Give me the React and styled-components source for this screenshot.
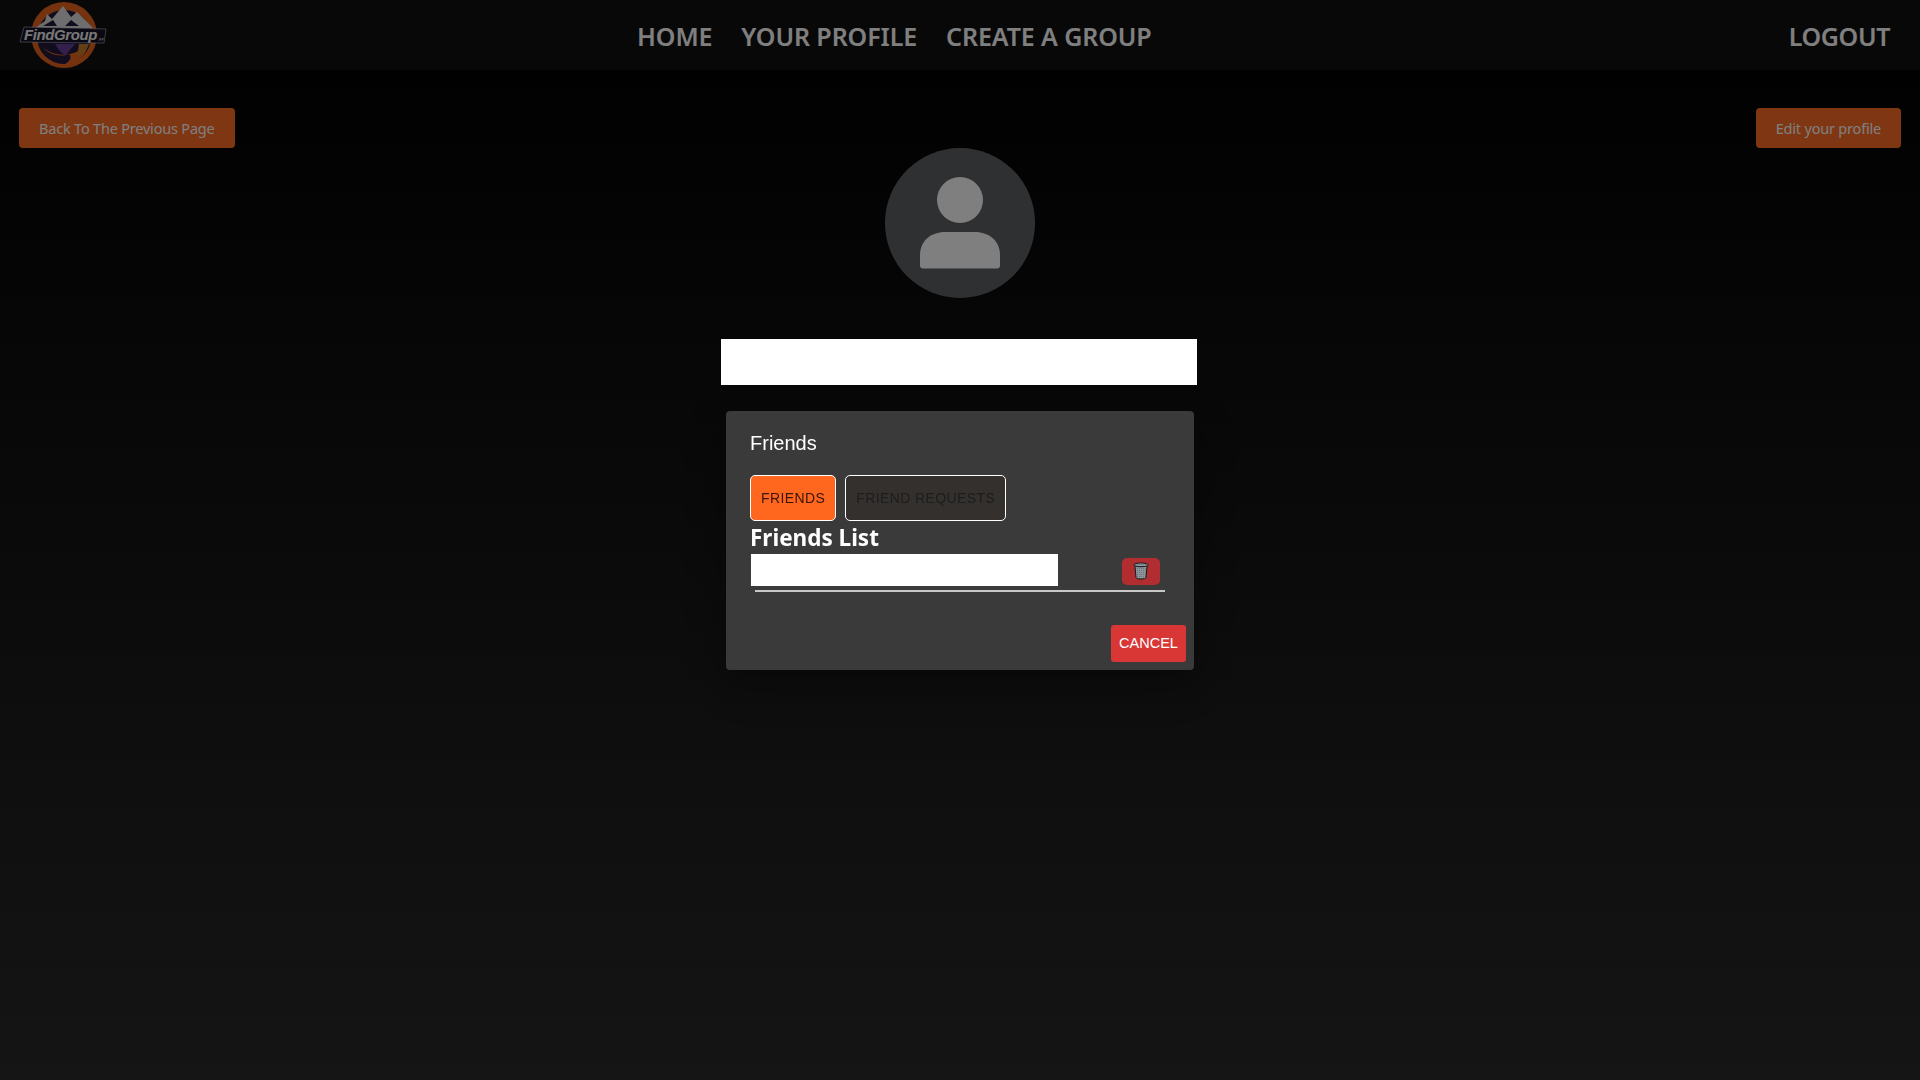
import React from "react"
import styled, { createGlobalStyle } from "styled-components"

const GlobalStyle = createGlobalStyle`
  * {
    box-sizing: border-box;
  }
  body {
    margin: 0;
    background: #000;
    font-family: "Liberation Sans", Arial, sans-serif;
  }
`

const segoe = `"Noto Sans", "Open Sans", sans-serif`

const Page = styled.div`
  min-height: 100vh;
  background: linear-gradient(180deg, #000 0%, #2a2a2a 100%);
`

const Header = styled.header`
  height: 70px;
  background: #101010;
  padding: 1px 30px 0 19px;
  display: flex;
  align-items: center;
`

const LogoBox = styled.div`
  width: 618px;
  height: 70px;
  margin-top: -1px;
  flex-shrink: 0;
`

const Nav = styled.nav`
  display: flex;
  gap: 29px;
`

const NavLink = styled.a`
  font-family: ${segoe};
  font-size: 25px;
  font-weight: 600;
  line-height: 36px;
  letter-spacing: ${(p) => (p.$end ? "-0.4px" : "-0.1px")};
  color: #fff;
  white-space: nowrap;
  margin-left: ${(p) => (p.$end ? "auto" : "0")};
`

const Content = styled.main`
  padding: 38px 19px 0;
  display: flex;
  flex-direction: column;
  align-items: center;
`

const ButtonRow = styled.div`
  width: 100%;
  display: flex;
  justify-content: space-between;
`

const ActionButton = styled.button`
  height: 40px;
  padding: 0 20px;
  border: 0;
  border-radius: 4px;
  background: #ff6c24;
  color: #fff;
  font-family: ${segoe};
  font-size: 14.5px;
  letter-spacing: -0.2px;
`

const Avatar = styled.div`
  width: 150px;
  height: 150px;
  border-radius: 50%;
  background: #5e6165;
  display: flex;
  align-items: center;
  justify-content: center;
`

const NameBar = styled.div`
  position: relative;
  z-index: 20;
  width: 476px;
  height: 46px;
  margin: 41px 0 0 -2px;
  background: #fff;
`

const Overlay = styled.div`
  position: fixed;
  inset: 0;
  z-index: 10;
  background: rgba(0, 0, 0, 0.5);
  display: flex;
  justify-content: center;
  align-items: flex-start;
  padding-top: 411px;
`

const Dialog = styled.section`
  position: relative;
  z-index: 30;
  width: 468px;
  height: 259px;
  border-radius: 4px;
  background: #3a3a3a;
  box-shadow: 0 11px 15px -7px rgba(0, 0, 0, 0.2),
    0 24px 38px 3px rgba(0, 0, 0, 0.14), 0 9px 46px 8px rgba(0, 0, 0, 0.12);
  padding: 20px 8px 8px 24px;
  display: flex;
  flex-direction: column;
`

const DialogTitle = styled.h2`
  margin: 0;
  font-size: 20px;
  font-weight: 400;
  line-height: 24px;
  color: #fff;
`

const Tabs = styled.div`
  display: flex;
  gap: 9px;
  margin-top: 20px;
`

const Tab = styled.button`
  height: 46px;
  padding: 0 10px;
  border: 1px solid #fff;
  border-radius: 5px;
  background: ${(p) => (p.$active ? "#ff671f" : "#33302e")};
  color: ${(p) => (p.$active ? "#3a1405" : "#1d1d1d")};
  font-family: "Liberation Sans", Arial, sans-serif;
  font-size: 14px;
  letter-spacing: 0.4px;
`

const ListTitle = styled.h3`
  margin: 2px 0 0;
  font-family: ${segoe};
  font-size: 22.5px;
  font-weight: 700;
  line-height: 30px;
  color: #fff;
`

const FriendRow = styled.div`
  display: flex;
  align-items: center;
  width: 416px;
  margin-top: 1px;
  padding-right: 6px;
  justify-content: space-between;
`

const FriendName = styled.div`
  width: 307px;
  height: 32px;
  margin-left: 1px;
  background: #fff;
`

const DeleteButton = styled.button`
  width: 38px;
  height: 27px;
  margin-top: 2px;
  border: 0;
  border-radius: 5px;
  background: #b22d2f;
  display: flex;
  align-items: center;
  justify-content: center;
  padding: 0;
`

const Divider = styled.hr`
  width: 410px;
  height: 2px;
  margin: 4px 0 0 5px;
  border: 0;
  background: #c8c8c8;
`

const Footer = styled.div`
  display: flex;
  justify-content: flex-end;
  margin-top: auto;
`

const CancelButton = styled.button`
  width: 75px;
  height: 37px;
  padding: 0 0 1px;
  border: 0;
  border-radius: 3px;
  background: #d93636;
  color: #fff;
  font-family: "Liberation Sans", Arial, sans-serif;
  font-size: 14.5px;
`

const Logo = () => (
  <svg width="92" height="70" viewBox="0 0 92 70">
    <circle cx="45" cy="35" r="33" fill="#e8651f" />
    <circle cx="45" cy="37" r="27" fill="#241a3c" />
    <path d="M16 28 L26 21 L28 14 L33 19 L44 6 L52 17 L58 12 L74 28 Z" fill="#dcdcdc" />
    <path d="M24 26 L34 20 L38 26 Z M46 26 L52 20 L60 26 Z" fill="#241a3c" />
    <path d="M22 45 C30 56 54 60 68 44 C70 54 56 66 42 67 C50 62 54 58 50 54 C40 58 28 54 22 45 Z" fill="#e8651f" />
    <path d="M36 44 L56 44 L46 56 L40 50 Z" fill="#6a3e9a" />
    <path d="M60 44 L70 44 C68 50 64 54 58 56 Z" fill="#c77f2a" />
    <path d="M5 27 L87 29 L85 43 L1 42 Z" fill="#151024" stroke="#b8b8c8" strokeWidth="0.6" />
    <text
      x="5"
      y="40"
      fontFamily="'Liberation Sans', sans-serif"
      fontStyle="italic"
      fontWeight="700"
      fontSize="15"
      letterSpacing="-0.4"
      fill="#f0f0f0"
    >
      FindGroup
    </text>
    <text
      x="80"
      y="41"
      fontFamily="'Liberation Sans', sans-serif"
      fontStyle="italic"
      fontWeight="700"
      fontSize="4"
      fill="#c0c0c0"
    >
      FF
    </text>
  </svg>
)

const PersonIcon = () => (
  <svg width="150" height="150" viewBox="0 0 150 150">
    <circle cx="75" cy="52" r="23" fill="#fff" />
    <path
      d="M35 117 V107 C35 93 46 84 60 84 H90 C104 84 115 93 115 107 V117 C115 119.500 114 120.500 112 120.500 H38 C36 120.500 35 119.500 35 117 Z"
      fill="#fff"
    />
  </svg>
)

const TrashIcon = () => (
  <svg width="16" height="18" viewBox="0 0 16 18">
    <defs>
      <pattern id="trash-mesh" width="2" height="2" patternUnits="userSpaceOnUse">
        <rect width="2" height="2" fill="#8a959b" />
        <rect width="1" height="1" fill="#6b757a" />
      </pattern>
    </defs>
    <path
      d="M1 3 C1 1.800 4 1 8 1 C12 1 15 1.800 15 3 C15 3.800 14.300 4.200 14 4.700 L13 15.500 C12.800 16.500 11 17 8 17 C5 17 3.200 16.500 3 15.500 L2 4.700 C1.700 4.200 1 3.800 1 3 Z"
      fill="url(#trash-mesh)"
      stroke="#17181a"
      strokeWidth="1"
    />
    <path d="M2 4 C5 5 11 5 14 4" fill="none" stroke="#17181a" strokeWidth="1" />
  </svg>
)

const App = () => {
  return (
    <>
      <GlobalStyle />
      <Page>
        <Header>
          <LogoBox>
            <Logo />
          </LogoBox>
          <Nav>
            <NavLink>HOME</NavLink>
            <NavLink>YOUR PROFILE</NavLink>
            <NavLink>CREATE A GROUP</NavLink>
          </Nav>
          <NavLink $end>LOGOUT</NavLink>
        </Header>
        <Content>
          <ButtonRow>
            <ActionButton>Back To The Previous Page</ActionButton>
            <ActionButton>Edit your profile</ActionButton>
          </ButtonRow>
          <Avatar>
            <PersonIcon />
          </Avatar>
          <NameBar />
        </Content>
        <Overlay>
          <Dialog>
            <DialogTitle>Friends</DialogTitle>
            <Tabs>
              <Tab $active>FRIENDS</Tab>
              <Tab>FRIEND REQUESTS</Tab>
            </Tabs>
            <ListTitle>Friends List</ListTitle>
            <FriendRow>
              <FriendName />
              <DeleteButton>
                <TrashIcon />
              </DeleteButton>
            </FriendRow>
            <Divider />
            <Footer>
              <CancelButton>CANCEL</CancelButton>
            </Footer>
          </Dialog>
        </Overlay>
      </Page>
    </>
  )
}

export default App
